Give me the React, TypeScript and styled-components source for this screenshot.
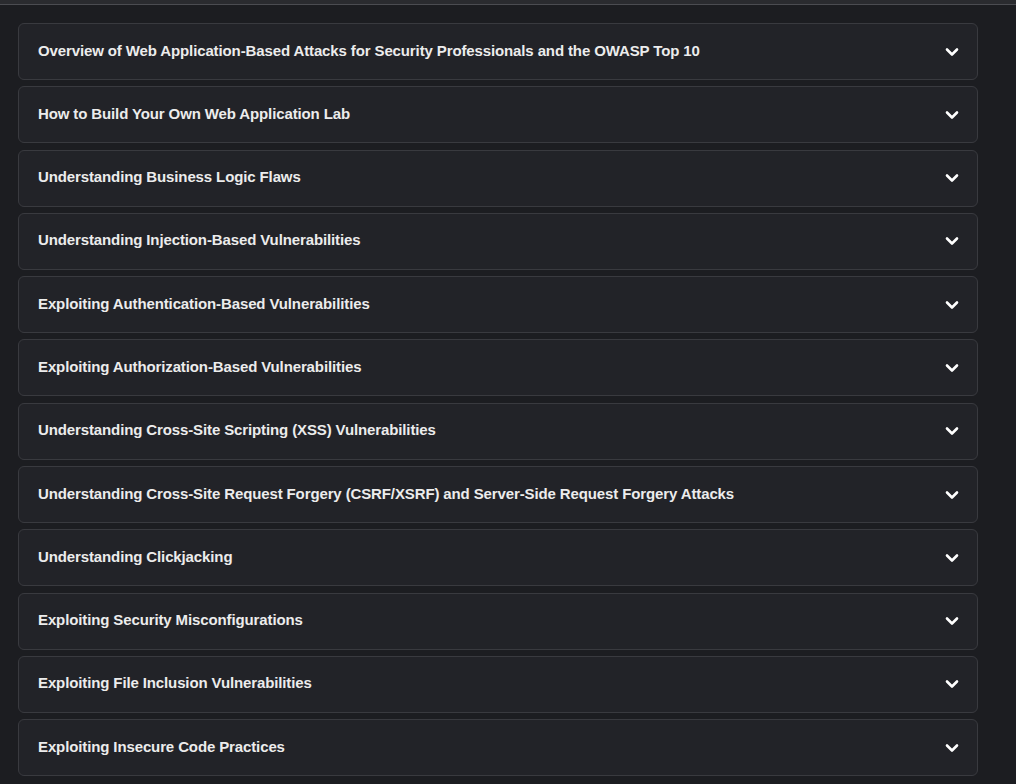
import React from "react";
import styled, { createGlobalStyle } from "styled-components";

const GlobalStyle = createGlobalStyle`
  html, body {
    margin: 0;
    padding: 0;
    background: #1c1d21;
  }
  body {
    font-family: "Liberation Sans", Arial, sans-serif;
    color: #f2f2f2;
  }
`;

const TopStrip = styled.div`
  height: 4px;
  background: #2a2b2f;
  border-bottom: 1px solid #4b4c51;
`;

const List = styled.div`
  display: flex;
  flex-direction: column;
  gap: 6.3px;
  padding: 18px 0 0 18px;
  width: 960px;
`;

const Item = styled.div`
  box-sizing: border-box;
  height: 57px;
  display: flex;
  align-items: center;
  justify-content: space-between;
  padding: 0 18px 3px 19px;
  background: #222328;
  border: 1px solid #393a3f;
  border-radius: 6px;
`;

const Title = styled.span`
  font-size: 15px;
  font-weight: 700;
  color: #ececec;
  letter-spacing: -0.12px;
`;

const Chevron = styled.svg`
  width: 14px;
  height: 10px;
  flex: none;
  margin-top: 3px;
`;

const topics = [
  "Overview of Web Application-Based Attacks for Security Professionals and the OWASP Top 10",
  "How to Build Your Own Web Application Lab",
  "Understanding Business Logic Flaws",
  "Understanding Injection-Based Vulnerabilities",
  "Exploiting Authentication-Based Vulnerabilities",
  "Exploiting Authorization-Based Vulnerabilities",
  "Understanding Cross-Site Scripting (XSS) Vulnerabilities",
  "Understanding Cross-Site Request Forgery (CSRF/XSRF) and Server-Side Request Forgery Attacks",
  "Understanding Clickjacking",
  "Exploiting Security Misconfigurations",
  "Exploiting File Inclusion Vulnerabilities",
  "Exploiting Insecure Code Practices",
];

export default function App() {
  return (
    <>
      <GlobalStyle />
      <TopStrip />
      <List>
        {topics.map((t) => (
          <Item key={t}>
            <Title>{t}</Title>
            <Chevron viewBox="0 0 14 10">
              <path
                d="M2 2.5 L7 7.5 L12 2.5"
                fill="none"
                stroke="#ffffff"
                strokeWidth="2.6"
                strokeLinecap="round"
                strokeLinejoin="round"
              />
            </Chevron>
          </Item>
        ))}
      </List>
    </>
  );
}
